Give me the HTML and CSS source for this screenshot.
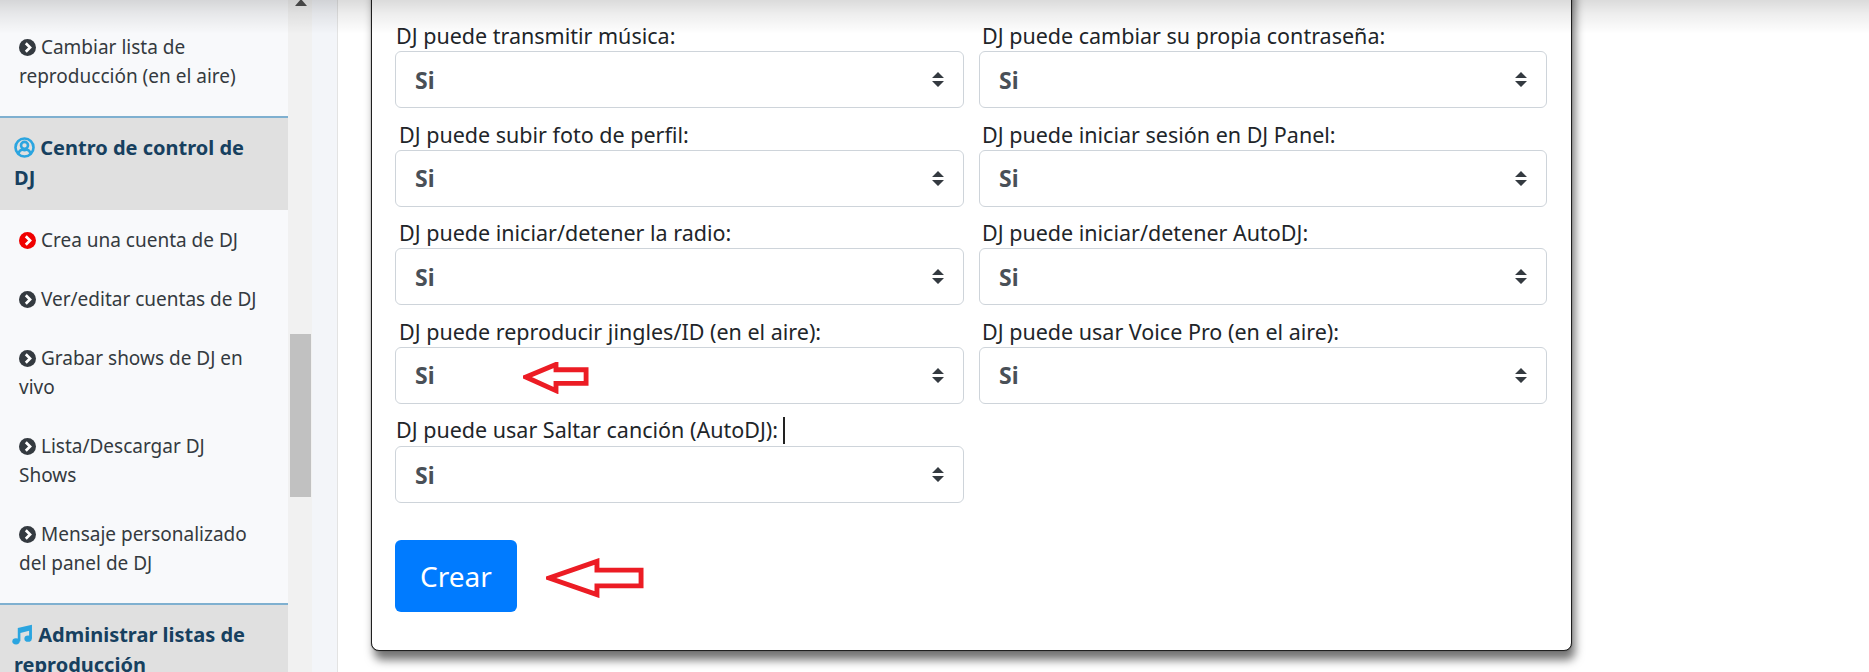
FILE: index.html
```html
<!DOCTYPE html>
<html lang="es">
<head>
<meta charset="utf-8">
<title>Crear cuenta de DJ</title>
<link rel="stylesheet" href="styles.css">
</head>
<body>
<div class="topshade"></div>
<div class="page">
  <aside class="sidebar">
    <ul class="menu first">
      <li><svg class="chev" viewBox="0 0 20 20"><circle cx="10" cy="10" r="10"/><path d="M8 5l5 5-5 5"/></svg> Cambiar lista de reproducción (en el aire)</li>
    </ul>
    <h3 class="head"><svg class="hicon" viewBox="0 0 24 24"><circle cx="12" cy="12" r="10.300" class="ring"/><circle cx="12" cy="9.500" r="4" class="ring"/><path d="M5 19c1-3.500 3-4.500 4.500-4.500 1.500.8 3.500.8 5 0 1.500 0 3.500 1 4.500 4.500" class="ring"/></svg> Centro de control de DJ</h3>
    <ul class="menu">
      <li><svg class="chev red" viewBox="0 0 20 20"><circle cx="10" cy="10" r="10"/><path d="M8 5l5 5-5 5"/></svg> Crea una cuenta de DJ</li>
      <li><svg class="chev" viewBox="0 0 20 20"><circle cx="10" cy="10" r="10"/><path d="M8 5l5 5-5 5"/></svg> Ver/editar cuentas de DJ</li>
      <li><svg class="chev" viewBox="0 0 20 20"><circle cx="10" cy="10" r="10"/><path d="M8 5l5 5-5 5"/></svg> Grabar shows de DJ en vivo</li>
      <li><svg class="chev" viewBox="0 0 20 20"><circle cx="10" cy="10" r="10"/><path d="M8 5l5 5-5 5"/></svg> Lista/Descargar DJ Shows</li>
      <li><svg class="chev" viewBox="0 0 20 20"><circle cx="10" cy="10" r="10"/><path d="M8 5l5 5-5 5"/></svg> Mensaje personalizado del panel de DJ</li>
    </ul>
    <h3 class="head"><svg class="hicon music" viewBox="0 0 20 20"><ellipse cx="3.800" cy="16.500" rx="3.500" ry="3"/><ellipse cx="15.300" cy="14" rx="3.500" ry="3"/><path d="M5.500 16.500V3.800L19 .8V14h-2.700V6.500L8 8.600V16.500z"/></svg> Administrar listas de reproducción</h3>
  </aside>
  <div class="scrollbar"><div class="arrow-up"></div><div class="thumb"></div></div>
  <div class="gutter"></div>
  <main class="main">
    <form class="card">
      <div class="grid">
        <div class="field flush"><label>DJ puede transmitir música:</label><select><option>Si</option></select></div>
        <div class="field"><label>DJ puede cambiar su propia contraseña:</label><select><option>Si</option></select></div>
        <div class="field"><label>DJ puede subir foto de perfil:</label><select><option>Si</option></select></div>
        <div class="field"><label>DJ puede iniciar sesión en DJ Panel:</label><select><option>Si</option></select></div>
        <div class="field"><label>DJ puede iniciar/detener la radio:</label><select><option>Si</option></select></div>
        <div class="field"><label>DJ puede iniciar/detener AutoDJ:</label><select><option>Si</option></select></div>
        <div class="field"><label>DJ puede reproducir jingles/ID (en el aire):</label><select><option>Si</option></select>
          <svg class="note note-small" viewBox="0 0 68 32"><path d="M3 15L34 2V7.500H65V21.500H34V29z"/></svg>
        </div>
        <div class="field"><label>DJ puede usar Voice Pro (en el aire):</label><select><option>Si</option></select></div>
        <div class="field flush"><label>DJ puede usar Saltar canción (AutoDJ):<span class="caret"></span></label><select><option>Si</option></select></div>
      </div>
      <div class="actions">
        <button type="button" class="btn">Crear</button>
        <svg class="note note-big" viewBox="0 0 100 40"><path d="M3 20L52 3V12H97V28H52V37z"/></svg>
      </div>
    </form>
  </main>
</div>
</body>
</html>
```
FILE: styles.css
```css
* { box-sizing: border-box; }
html, body { margin: 0; padding: 0; height: 672px; overflow: hidden; background: #fff; }
body { font-family: "Noto Sans", "Open Sans", sans-serif; color: #212529; position: relative; }

.topshade {
  position: absolute; left: 0; top: 0; right: 0; height: 34px; z-index: 5; pointer-events: none;
  background: linear-gradient(to bottom, rgba(0,0,0,.14), rgba(0,0,0,.07) 40%, rgba(0,0,0,0));
}

.page { display: flex; height: 672px; overflow: hidden; }

.sidebar { width: 288px; flex: none; background: #f8f9fb; overflow: hidden; }
.menu { list-style: none; margin: 0 0 11px; padding: 0; }
.menu.first { margin-top: 17px; }
.menu li { padding: 16px 26px 14px 19px; font-size: 19px; line-height: 29px; color: #343a40; }
.chev { width: 17px; height: 17px; vertical-align: -2px; fill: #343a40; }
.chev path { fill: none; stroke: #fff; stroke-width: 3.2; }
.chev.red { fill: #f00000; }

.head {
  margin: 0; padding: 15px 24px 17px 14px; background: #e0e0e0; border-top: 2px solid #7fb0d0;
  font-size: 20px; line-height: 30px; font-weight: 700; color: #17405f;
}
.hicon { width: 21px; height: 21px; vertical-align: -3px; }
.ring { fill: none; stroke: #2ba5e0; stroke-width: 3; }
.hicon.music { width: 21px; height: 21px; margin-left: -2px; fill: #2ba5e0; vertical-align: -3px; }

.scrollbar { width: 24px; flex: none; background: #f1f1f1; padding: 0 1px 0 2px; position: relative; }
.arrow-up {
  position: absolute; left: 7px; top: -1px; width: 0; height: 0;
  border-left: 6px solid transparent; border-right: 6px solid transparent; border-bottom: 7px solid #505050;
}
.thumb { margin-top: 334px; width: 21px; height: 163px; background: #c1c1c1; }

.gutter { width: 26px; flex: none; background: #f3f5f9; border-right: 1px solid #e3e3e3; }

.main { flex: 1; padding: 0 0 0 33px; min-width: 0; }

.card {
  width: 1201px; height: 671px; margin-top: -20px; padding: 41px 23px 0;
  background: #fff; border: 1px solid #1f1f1f; border-radius: 8px;
  box-shadow: 0 0 1px #333, 3px 9px 10px rgba(0,0,0,.55);
}

.grid { display: grid; grid-template-columns: 569px 568px; column-gap: 15px; row-gap: 12.6px; }
.field { position: relative; }
.field label {
  display: block; padding: 0 0 2px 4px; font-size: 21.5px; line-height: 27px; color: #212529;
  white-space: nowrap;
}
.field:nth-child(even) label { padding-left: 3px; }
.field.flush label { padding-left: 1px; }
.field select {
  display: block; width: 100%; height: 57px; padding: 0 40px 0 19px;
  appearance: none; -webkit-appearance: none;
  font: 700 23px "Noto Sans", "Open Sans", sans-serif; color: #495057;
  border: 1px solid #ced4da; border-radius: 6px;
  background: #fff url("data:image/svg+xml,%3csvg xmlns='http://www.w3.org/2000/svg' viewBox='0 0 4 5'%3e%3cpath fill='%23343a40' d='M2 0L0 2h4zm0 5L0 3h4z'/%3e%3c/svg%3e") no-repeat right 19px center / 12px 15px;
}
.caret { display: inline-block; width: 2px; height: 27px; background: #222; vertical-align: -6px; margin-left: 5px; }

.actions { display: flex; align-items: center; gap: 29px; margin-top: 37px; }
.btn {
  width: 122px; height: 72px; padding: 0; border: 0; border-radius: 6px;
  background: #007bff; color: #fff; font: 400 28px "Noto Sans", "Open Sans", sans-serif;
}

.note { fill: #fff; stroke: #ec1c24; stroke-width: 5; stroke-linejoin: miter; }
.note-small { position: absolute; left: 128px; top: 44px; width: 66px; height: 32px; }
.note-big { display: block; width: 98px; height: 40px; margin-top: 4px; }
```
